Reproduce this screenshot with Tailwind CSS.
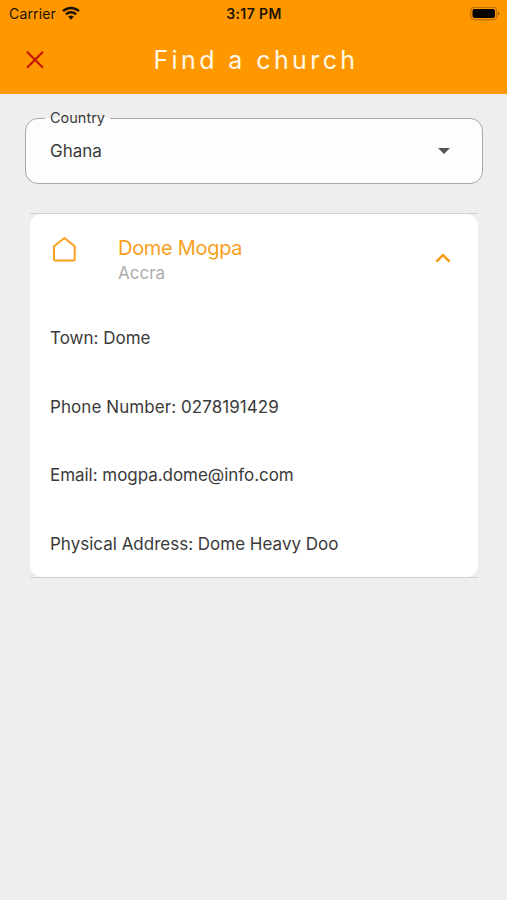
<!DOCTYPE html>
<html lang="en">
<head>
<meta charset="utf-8">
<title>Find a church</title>
<script src="https://cdn.jsdelivr.net/npm/@tailwindcss/browser@4"></script>
</head>
<body class="h-[900px] w-[507px] overflow-hidden bg-[#eeeeee] font-['Inter',sans-serif] text-[#3a3a3a]">
<header class="h-[94px] bg-[#ff9800]">
  <div class="grid h-7 grid-cols-3 items-center pl-[9px] pr-[8px] text-[#1c1300]">
    <div class="flex items-center gap-[6px]">
      <span class="text-[14px] leading-5 tracking-[0.15px]">Carrier</span>
      <svg class="-mt-[2px] h-[14px] w-[18px]" viewBox="0 0 18 14" fill="none" stroke="#1c1300"><path d="M1 5.2a11.6 11.6 0 0 1 16 0" stroke-width="2.5"/><path d="M3.9 8.3a7.4 7.4 0 0 1 10.2 0" stroke-width="2.3"/><path d="M9 13.8l-2.8-3a4 4 0 0 1 5.6 0z" fill="#1c1300" stroke="none"/></svg>
    </div>
    <span class="text-center text-[14px] font-semibold leading-5 tracking-[0.4px]">3:17 PM</span>
    <svg class="-mr-[1px] h-[14px] w-[30px] justify-self-end" viewBox="0 0 30 14"><rect x=".8" y=".2" width="26" height="12.6" rx="3.4" fill="none" stroke="#a96500"/><rect x="2.5" y="2" width="22.5" height="9" rx="2" fill="#050300"/><path d="M28 4.6v4q1.7-.6 1.7-2T28 4.6z" fill="#a96500"/></svg>
  </div>
  <div class="grid h-[64px] grid-cols-[70px_1fr_70px] items-center">
    <svg class="ml-[26px] h-[18px] w-[18px]" viewBox="0 0 18 18" fill="none" stroke="#c41200" stroke-width="2"><path d="M1 .8l16 16M17 .8L1 16.8"/></svg>
    <h1 class="pl-[5px] text-center text-[25px] font-normal leading-8 tracking-[3.4px] text-[#fff8e6]">Find a church</h1>
  </div>
</header>
<main>
  <div class="ml-[25px] mr-[24px] pt-[24px]">
    <div class="relative flex h-[66px] items-center justify-between rounded-[13px] border-[1.5px] border-[#a9a9a9] bg-[#fdfdfd] pl-[24px] pr-[32px]">
      <span class="absolute -top-[10px] left-[19px] bg-linear-to-b from-[#eeeeee] from-50% to-[#fdfdfd] to-50% px-[5px] text-[14.5px] leading-[18px]">Country</span>
      <span class="text-[17px] leading-6">Ghana</span>
      <svg class="h-[6px] w-[12px]" viewBox="0 0 12 6"><path d="M0 0h12L6 6z" fill="#555"/></svg>
    </div>
  </div>
  <section class="ml-[30px] mr-[29px] mt-[29px] border-y border-[#d2d2d2]">
    <div class="h-[362.5px] rounded-[12px] bg-white px-5 pt-[21px]">
      <div class="flex h-[54px] items-start">
        <svg class="ml-[2px] mt-[0.5px] h-[26px] w-[25px]" viewBox="0 0 25 26" fill="none" stroke="#f8a11e" stroke-width="2" stroke-linejoin="round"><path d="M2 10.2L12.5 2l10.2 8.2v13.2q0 1-1 1H3q-1 0-1-1z"/></svg>
        <div class="ml-[41px] flex-1">
          <h2 class="text-[20px] leading-[27px] tracking-[-0.3px] text-[#f9a01b]">Dome Mogpa</h2>
          <p class="text-[17px] leading-[23px] text-[#adadad]">Accra</p>
        </div>
        <svg class="mr-[7px] mt-[18px] h-[10px] w-[16px]" viewBox="0 0 16 10" fill="none" stroke="#f59a12" stroke-width="2.5"><path d="M1.4 8.7L8 2.1l6.6 6.6"/></svg>
      </div>
      <div class="mt-[15.5px] text-[17px]">
        <p class="flex h-[68.5px] items-center">Town: Dome</p>
        <p class="flex h-[68.5px] items-center tracking-[0.07px]">Phone Number: 0278191429</p>
        <p class="flex h-[68.5px] items-center tracking-[-0.04px]">Email: mogpa.dome@info.com</p>
        <p class="flex h-[68.5px] items-center">Physical Address: Dome Heavy Doo</p>
      </div>
    </div>
  </section>
</main>
</body>
</html>
